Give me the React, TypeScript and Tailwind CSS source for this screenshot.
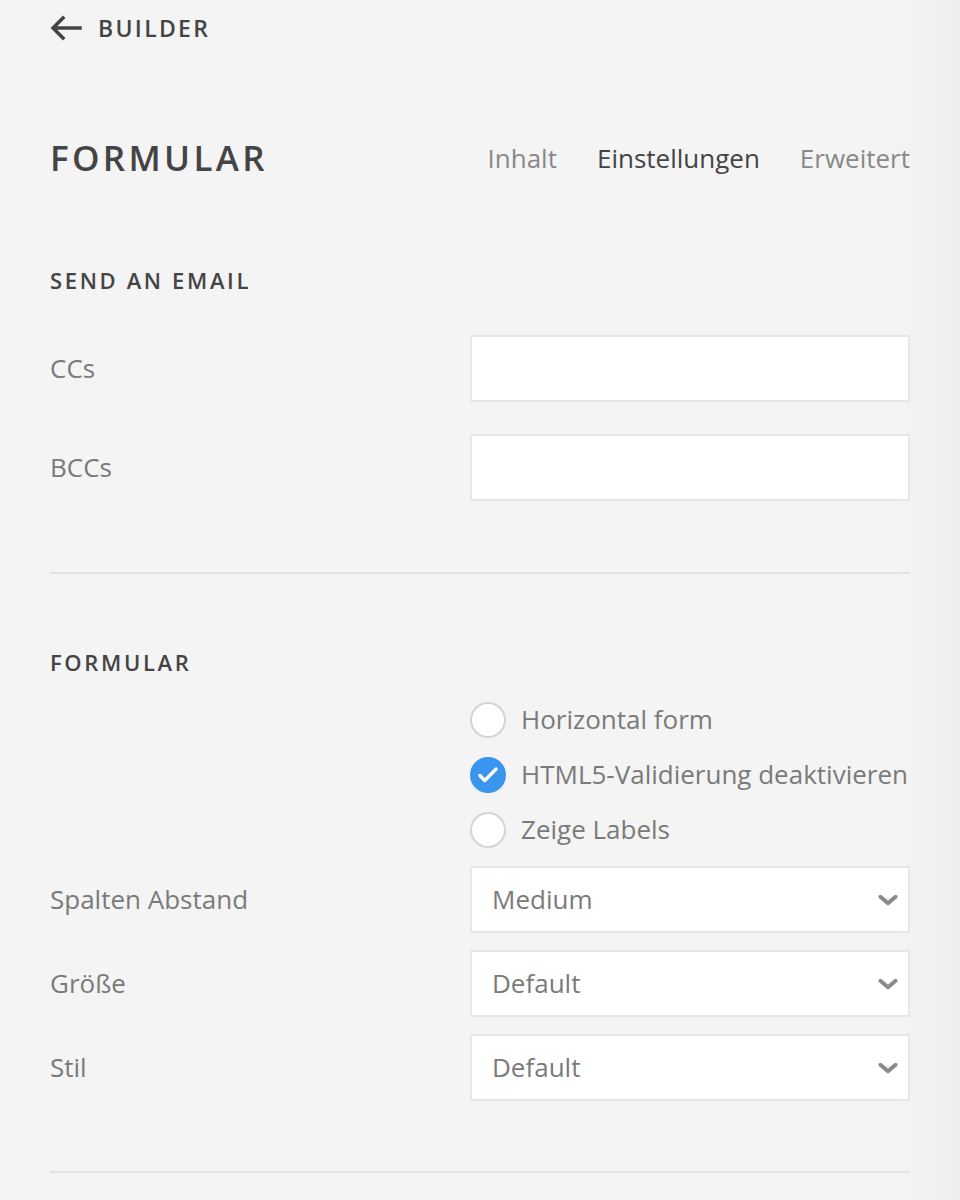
import { useState } from "react";

const heading = { fontFamily: '"Open Sans", "Noto Sans", sans-serif' };

const Field = ({ label }: { label: string }) => (
  <div className="flex items-center">
    <label className="w-[420px] text-[26px] text-[#7a7a7a]">{label}</label>
    <input
      type="text"
      className="h-[67px] flex-1 border-2 border-[#e6e6e6] bg-white px-5 text-[26px] outline-none"
    />
  </div>
);

const Select = ({ label, value }: { label: string; value: string }) => (
  <div className="flex items-center">
    <label className="w-[420px] text-[26px] text-[#7a7a7a]">{label}</label>
    <div className="flex h-[67px] flex-1 items-center justify-between border-2 border-[#e6e6e6] bg-white pl-[20px] pr-[7px]">
      <span className="text-[26px] text-[#7a7a7a]">{value}</span>
      <svg width="26" height="26" viewBox="0 0 24 24" fill="none" stroke="#8a8a8a" strokeWidth="3.6" strokeLinecap="round" strokeLinejoin="round">
        <path d="M5 9l7 6 7-6" />
      </svg>
    </div>
  </div>
);

const Check = ({ label, checked }: { label: string; checked?: boolean }) => (
  <div className="flex h-[55px] items-center gap-[15px]">
    {checked ? (
      <span className="flex h-[36px] w-[36px] items-center justify-center rounded-full bg-[#3a95ef]">
        <svg width="26" height="26" viewBox="0 0 24 24" fill="none" stroke="white" strokeWidth="3.2" strokeLinecap="round" strokeLinejoin="round">
          <path d="M4.5 12.5l4.5 4.5L19.5 6.5" />
        </svg>
      </span>
    ) : (
      <span className="h-[36px] w-[36px] rounded-full border-2 border-[#d4d4d4] bg-white" />
    )}
    <span className="text-[26px] text-[#7a7a7a]">{label}</span>
  </div>
);

export default function App() {
  const [tab] = useState("Einstellungen");
  const tabs = ["Inhalt", "Einstellungen", "Erweitert"];

  return (
    <div
      className="min-h-[1200px] bg-[#f4f4f4] bg-gradient-to-r from-[#f4f4f4] from-[93%] to-[#eeeeee] pl-[50px] pr-[50px]"
      style={{ fontFamily: '"Open Sans", "Noto Sans", sans-serif' }}
    >
      <a className="flex h-[56px] items-center gap-[16px] text-[#444]">
        <svg width="32" height="26" viewBox="0 0 32 26" fill="none" stroke="#444" strokeWidth="3.5" strokeLinecap="square">
          <path d="M30 13H4M13 3L3 13l10 10" />
        </svg>
        <span className="text-[23px] font-semibold tracking-[0.1em]" style={heading}>BUILDER</span>
      </a>

      <div className="mt-[82px] flex h-[40px] items-center justify-between">
        <h1 className="text-[35px] font-semibold leading-[40px] tracking-[0.095em] text-[#444]" style={heading}>FORMULAR</h1>
        <nav className="flex gap-[40px] text-[26px] leading-[40px]">
          {tabs.map((t) => (
            <a key={t} className={t === tab ? "text-[#444]" : "text-[#888]"}>{t}</a>
          ))}
        </nav>
      </div>

      <h2 className="mt-[87px] text-[22px] font-semibold leading-[30px] tracking-[0.12em] text-[#444]" style={heading}>SEND AN EMAIL</h2>
      <div className="mt-[40px] flex flex-col gap-[32px]">
        <Field label="CCs" />
        <Field label="BCCs" />
      </div>

      <hr className="mt-[71px] border-t-2 border-[#e3e3e3]" />

      <h2 className="mt-[73px] text-[22px] font-semibold leading-[30px] tracking-[0.12em] text-[#444]" style={heading}>FORMULAR</h2>
      <div className="mt-[15px] pl-[420px]">
        <Check label="Horizontal form" />
        <Check label="HTML5-Validierung deaktivieren" checked />
        <Check label="Zeige Labels" />
      </div>
      <div className="mt-[9px] flex flex-col gap-[17px]">
        <Select label="Spalten Abstand" value="Medium" />
        <Select label="Größe" value="Default" />
        <Select label="Stil" value="Default" />
      </div>

      <hr className="mt-[70px] border-t-2 border-[#e3e3e3]" />
    </div>
  );
}
